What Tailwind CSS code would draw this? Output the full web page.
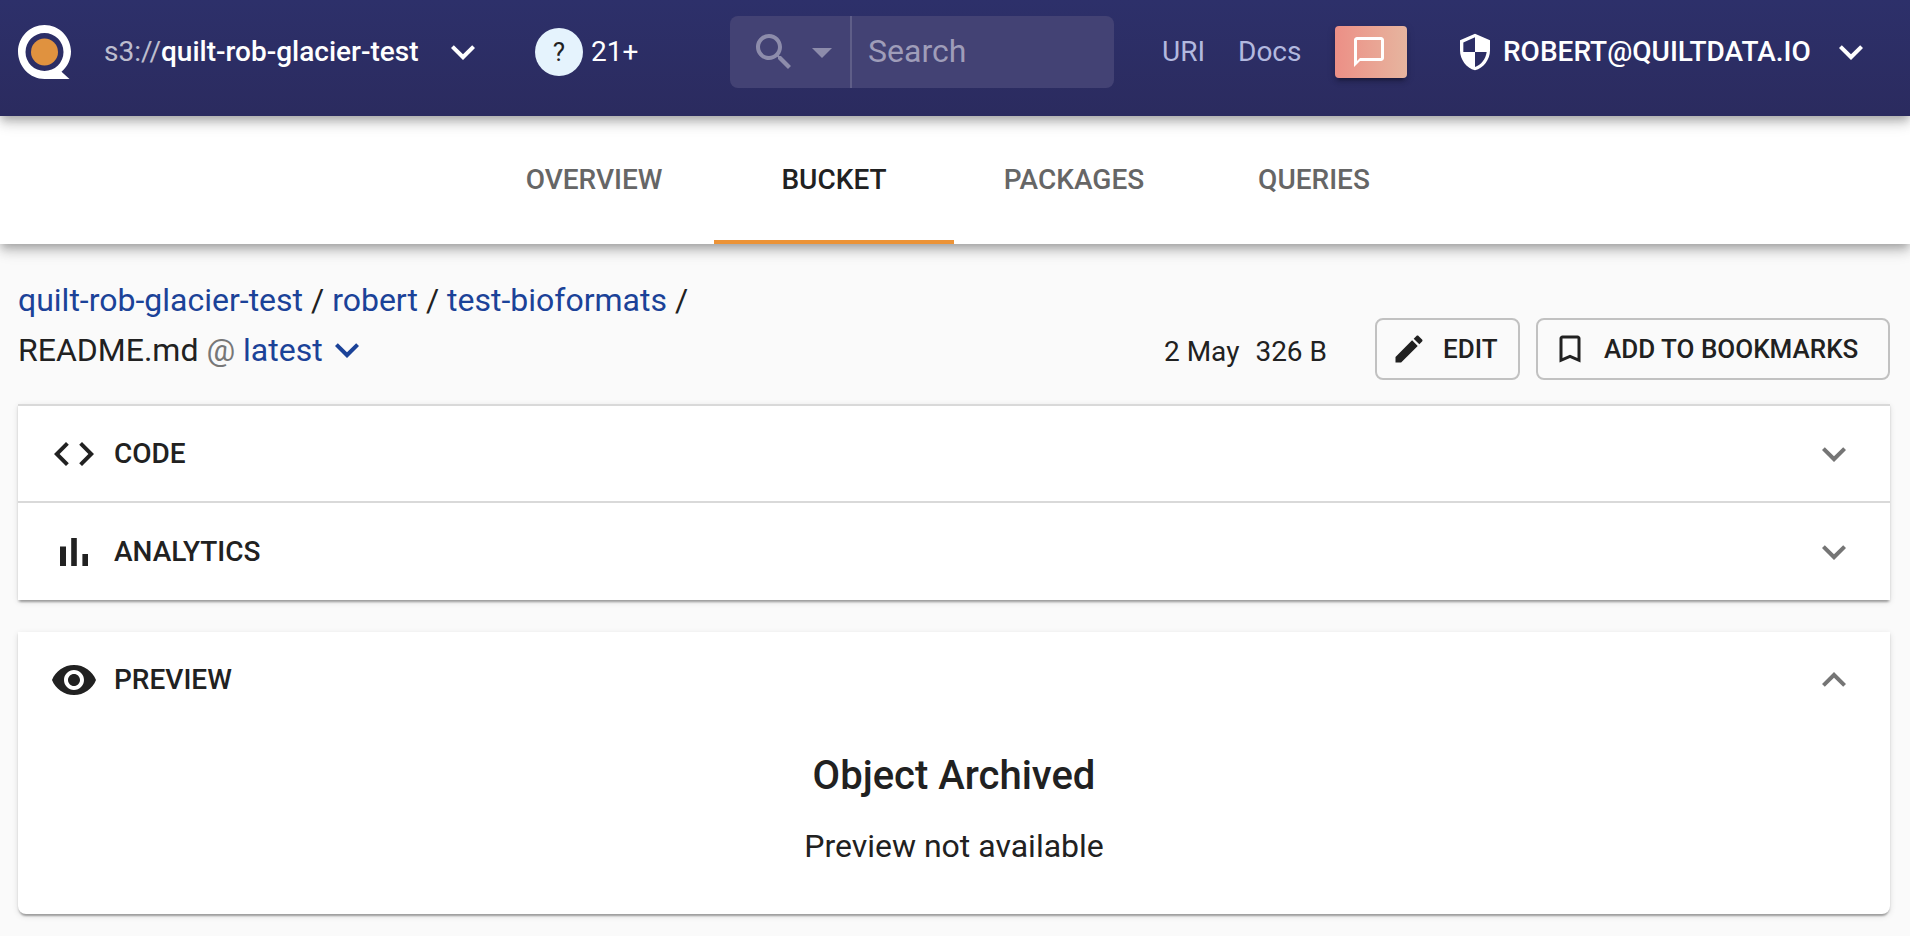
<!DOCTYPE html>
<html lang="en">
<head>
<meta charset="utf-8">
<title>README.md - quilt-rob-glacier-test</title>
<script src="https://cdn.jsdelivr.net/npm/@tailwindcss/browser@4"></script>
</head>
<body class="min-h-screen bg-[#fafafa] font-[Roboto,sans-serif] text-[28px] leading-10 text-[#212121]">
<svg class="hidden">
  <symbol id="down" viewBox="0 0 24 24"><path d="M16.59 8.59 12 13.17 7.41 8.59 6 10l6 6 6-6z"/></symbol>
</svg>

<header class="relative z-20 flex h-[116px] items-center bg-linear-to-b from-[#2d306a] to-[#2b2b5f] px-[18px] pb-3 text-white shadow-[0_4px_8px_-2px_rgba(0,0,0,0.2),0_8px_10px_0_rgba(0,0,0,0.14),0_2px_20px_0_rgba(0,0,0,0.12)]">
  <a href="#" aria-label="Quilt home" class="shrink-0">
    <svg class="h-[54px] w-[54px]" viewBox="0 0 54 54">
      <path fill="#fff" fill-rule="evenodd" d="M26.500 0C41 0 53 12 53 26.500C53 34.500 49.500 41.500 43.500 46.800L51.500 54H26.500C12 54 0 41.500 0 26.500C0 12 12 0 26.500 0ZM26.500 8A19 19 0 1 0 26.500 46A19 19 0 1 0 26.500 8Z"/>
      <circle cx="26.500" cy="27" r="13.500" fill="#e0923f"/>
    </svg>
  </a>
  <button type="button" class="ml-8 flex w-[390px] items-center">
    <span class="w-[335px] text-left font-medium"><span class="font-normal text-white/70">s3://</span>quilt-rob-glacier-test</span>
    <svg class="h-12 w-12 fill-current" aria-hidden="true"><use href="#down"/></svg>
  </button>
  <div class="ml-[41px] flex w-[195px] items-center">
    <button type="button" class="h-12 w-12 rounded-full bg-[#e5f3fd] text-[26px] text-[#212121]">?</button>
    <span class="ml-2">21+</span>
  </div>
  <form class="flex h-[72px] w-[384px] shrink-0 items-center overflow-hidden rounded-lg bg-[#434274]">
    <button type="button" aria-label="Search options" class="flex h-full w-[122px] shrink-0 items-center border-r-2 border-[#5f5e88] pl-5 text-[#8d8cab]">
      <svg class="h-12 w-12 fill-current" viewBox="0 0 24 24"><path d="M15.500 14h-.79l-.28-.27C15.410 12.590 16 11.110 16 9.500 16 5.910 13.090 3 9.500 3S3 5.910 3 9.500 5.910 16 9.500 16c1.610 0 3.090-.59 4.230-1.570l.27.28v.79l5 4.990L20.490 19l-4.990-5zm-6 0C7.010 14 5 11.990 5 9.500S7.010 5 9.500 5 14 7.010 14 9.500 11.990 14 9.500 14z"/></svg>
      <svg class="h-12 w-12 fill-current" viewBox="0 0 24 24"><path d="m7 10 5 5 5-5z"/></svg>
    </button>
    <input type="text" aria-label="Search" placeholder="Search" class="h-full w-full min-w-0 bg-transparent pb-0.5 pl-4 text-[32px] outline-none placeholder:text-[#9f9db9]">
  </form>
  <nav class="ml-12 flex text-[#b3b9df]">
    <a href="#" class="w-[76px]">URI</a>
    <a href="#" class="w-[65px]">Docs</a>
  </nav>
  <button type="button" aria-label="Feedback" class="ml-8 h-[52px] w-[72px] shrink-0 rounded bg-linear-to-r from-[#ec8f86] to-[#e6b59f] pl-4 shadow-[0_6px_2px_-4px_rgba(0,0,0,0.2),0_4px_4px_0_rgba(0,0,0,0.14),0_2px_10px_0_rgba(0,0,0,0.12)]">
    <svg class="h-9 w-9 fill-white" viewBox="0 0 24 24"><path d="M20 2H4c-1.100 0-2 .9-2 2v18l4-4h14c1.100 0 2-.9 2-2V4c0-1.100-.9-2-2-2zm0 14H6l-2 2V4h16v12z"/></svg>
  </button>
  <button type="button" class="ml-auto flex w-[437px] shrink-0 items-center font-medium">
    <svg class="mr-2 h-10 w-10 fill-white" viewBox="0 0 24 24"><path d="M12 1L3 5v6c0 5.550 3.840 10.740 9 12 5.160-1.260 9-6.450 9-12V5l-9-4zm0 10.990h7c-.53 4.120-3.280 7.790-7 8.940V12H5V6.300l7-3.110v8.800z"/></svg>
    <span class="w-[324px] text-left">ROBERT@QUILTDATA.IO</span>
    <svg class="h-12 w-12 fill-current" aria-hidden="true"><use href="#down"/></svg>
  </button>
</header>

<nav class="relative z-10 flex h-32 justify-center bg-white pr-0.5 text-center font-medium text-[#666] shadow-[0_4px_8px_-2px_rgba(0,0,0,0.2),0_8px_10px_0_rgba(0,0,0,0.14),0_2px_20px_0_rgba(0,0,0,0.12)]">
  <a href="#" class="flex w-60 items-center justify-center">OVERVIEW</a>
  <a href="#" aria-current="page" class="flex w-60 items-center justify-center border-b-4 border-[#ec9337] pt-1 text-[#212121]">BUCKET</a>
  <a href="#" class="flex w-60 items-center justify-center">PACKAGES</a>
  <a href="#" class="flex w-60 items-center justify-center">QUERIES</a>
</nav>

<main class="pt-[31px] pr-5 pl-[18px]">
  <div class="flex items-end">
    <div class="pb-[5px] text-[32px] leading-[50px]">
      <div><a href="#" class="text-[#1b4298]">quilt-rob-glacier-test</a> / <a href="#" class="text-[#1b4298]">robert</a> / <a href="#" class="text-[#1b4298]">test-bioformats</a> /</div>
      <div class="flex items-center whitespace-pre">README.md <span class="text-[#777]">@ </span><button type="button" class="flex items-center text-[#1b4298]">latest<svg class="h-12 w-12 fill-current" aria-hidden="true"><use href="#down"/></svg></button></div>
    </div>
    <div class="mb-2 ml-auto flex gap-4">
      <span>2 May</span><span>326 B</span>
    </div>
    <div class="ml-12 flex gap-4 text-[26px] font-medium">
      <button type="button" class="flex h-[62px] w-[145px] items-center rounded-lg border-2 border-[#c1c1c1] pl-[14px]">
        <svg class="mr-4 h-9 w-9 fill-current" viewBox="0 0 24 24"><path d="M3 17.250V21h3.750L17.810 9.940l-3.750-3.750L3 17.250zM20.710 7.040c.39-.39.39-1.020 0-1.410l-2.340-2.340c-.39-.39-1.020-.39-1.410 0l-1.830 1.830 3.750 3.750 1.830-1.830z"/></svg>EDIT
      </button>
      <button type="button" class="flex h-[62px] w-[354px] items-center rounded-lg border-2 border-[#c1c1c1] pl-[14px]">
        <svg class="mr-4 h-9 w-9 fill-current" viewBox="0 0 24 24"><path d="M17 3H7c-1.100 0-1.990.9-1.990 2L5 21l7-3 7 3V5c0-1.100-.9-2-2-2zm0 15-5-2.180L7 18V5h10v13z"/></svg>ADD TO BOOKMARKS
      </button>
    </div>
  </div>

  <section class="mt-6 bg-white font-medium shadow-[0_4px_2px_-2px_rgba(0,0,0,0.2),0_2px_2px_0_rgba(0,0,0,0.14),0_2px_6px_0_rgba(0,0,0,0.12)]">
    <button type="button" class="flex h-[97px] w-full items-center border-t-2 border-[#d9d9d9] px-8">
      <svg class="mr-4 h-12 w-12 fill-current" viewBox="0 0 24 24"><path d="M9.400 16.600 4.800 12l4.600-4.600L8 6l-6 6 6 6 1.400-1.400zm5.200 0 4.600-4.600-4.600-4.600L16 6l6 6-6 6-1.400-1.400z"/></svg>CODE
      <svg class="ml-auto h-12 w-12 fill-[#757575]" aria-hidden="true"><use href="#down"/></svg>
    </button>
    <button type="button" class="flex h-[99px] w-full items-center border-t-2 border-[#d9d9d9] px-8">
      <svg class="mr-4 h-12 w-12 fill-current" viewBox="0 0 24 24"><path d="M5 9.200h3V19H5zM10.600 5h2.800v14h-2.800zm5.600 8H19v6h-2.800z"/></svg>ANALYTICS
      <svg class="ml-auto h-12 w-12 fill-[#757575]" aria-hidden="true"><use href="#down"/></svg>
    </button>
  </section>

  <section class="mt-8 rounded-b-lg bg-white pb-11 text-center shadow-[0_4px_2px_-2px_rgba(0,0,0,0.2),0_2px_2px_0_rgba(0,0,0,0.14),0_2px_6px_0_rgba(0,0,0,0.12)]">
    <button type="button" class="flex h-24 w-full items-center px-8 font-medium">
      <svg class="mr-4 h-12 w-12 fill-current" viewBox="0 0 24 24"><path d="M12 4.500C7 4.500 2.730 7.610 1 12c1.730 4.390 6 7.500 11 7.500s9.270-3.110 11-7.500c-1.730-4.390-6-7.500-11-7.500zM12 17c-2.760 0-5-2.240-5-5s2.240-5 5-5 5 2.240 5 5-2.240 5-5 5zm0-8c-1.660 0-3 1.340-3 3s1.340 3 3 3 3-1.340 3-3-1.340-3-3-3z"/></svg>PREVIEW
      <svg class="ml-auto h-12 w-12 rotate-180 fill-[#757575]" aria-hidden="true"><use href="#down"/></svg>
    </button>
    <h2 class="mt-4 text-[40px] leading-16 font-medium">Object Archived</h2>
    <p class="mt-[14px] text-[32px] leading-12">Preview not available</p>
  </section>
</main>
</body>
</html>
